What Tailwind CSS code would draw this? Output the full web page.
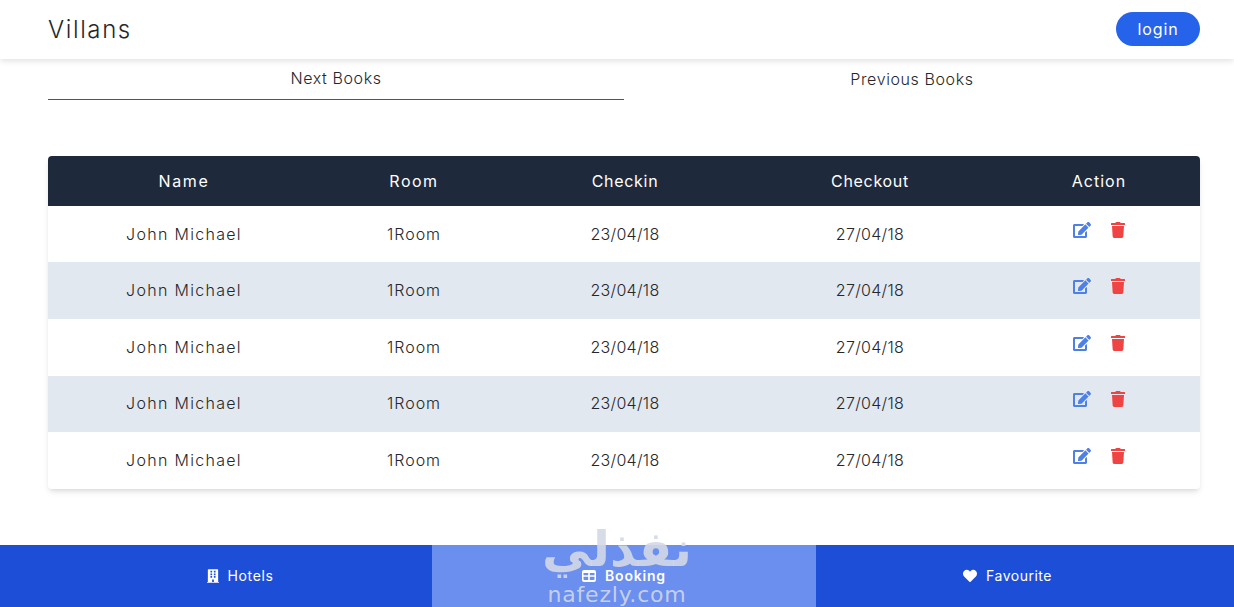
<!DOCTYPE html>
<html lang="en">
<head>
    <meta charset="UTF-8">
    <title>Villans</title>
    <script src="https://cdn.jsdelivr.net/npm/@tailwindcss/browser@4"></script>
</head>
<body class="bg-white text-[#27272a] font-['Inter',sans-serif] font-light h-[607px] overflow-hidden relative">
    <!-- Navbar -->
    <header class="h-[59px] bg-white shadow-[0_2px_6px_rgba(0,0,0,0.12)] pl-12 pr-[34px] flex items-center justify-between">
        <h1 class="text-2xl font-light tracking-[1.6px]">Villans</h1>
        <button class="w-[84px] h-[34px] -mt-[2px] rounded-full bg-[#2563eb] text-white text-base font-normal tracking-[0.9px]">login</button>
    </header>

    <!-- Tabs -->
    <div class="ml-12 w-[1152px] flex h-[41px]">
        <div class="w-1/2 border-b border-[#4b5563] text-center text-base pt-[7px] tracking-[0.6px]">Next Books</div>
        <div class="w-1/2 text-center text-base pt-[8px] tracking-[0.6px]">Previous Books</div>
    </div>

    <!-- Bookings table -->
    <div class="ml-12 w-[1152px] mt-[56px] rounded shadow-md overflow-hidden">
        <table class="w-full table-fixed text-center text-base">
            <thead class="bg-[#1e293b] text-white">
                <tr class="h-[50px]">
                    <th class="w-[272px] font-normal tracking-[1.6px]">Name</th>
                    <th class="w-[188px] font-normal tracking-[1.5px]">Room</th>
                    <th class="w-[234px] font-normal tracking-[0.7px]">Checkin</th>
                    <th class="w-[256px] font-normal tracking-[0.7px]">Checkout</th>
                    <th class="font-normal tracking-[1px]">Action</th>
                </tr>
            </thead>
            <tbody>
                <tr class="h-[56px] bg-white">
                    <td class="tracking-[1.3px]">John Michael</td><td class="tracking-[1px]">1Room</td><td class="tracking-[0.3px]">23/04/18</td><td class="tracking-[0.3px]">27/04/18</td>
                    <td>
                        <div class="flex justify-center gap-[20px] pb-[8px]">
                            <svg class="w-[18px] h-4 fill-[#4f80e6]" viewBox="0 0 576 512"><path d="M402.6 83.2l90.2 90.2c3.8 3.8 3.8 10 0 13.8L274.4 405.6l-92.8 10.3c-12.4 1.4-22.9-9.1-21.5-21.5l10.3-92.8L388.8 83.2c3.8-3.8 10-3.8 13.8 0zm162-22.9l-48.8-48.8c-15.2-15.2-39.9-15.2-55.2 0l-35.4 35.4c-3.8 3.8-3.8 10 0 13.8l90.2 90.2c3.8 3.8 10 3.8 13.8 0l35.4-35.4c15.2-15.3 15.2-40 0-55.2zM384 346.2V448H64V128h229.8c3.2 0 6.2-1.3 8.5-3.5l40-40c7.6-7.6 2.2-20.5-8.5-20.5H48C21.5 64 0 85.5 0 112v352c0 26.5 21.5 48 48 48h352c26.5 0 48-21.5 48-48V306.2c0-10.7-12.9-16-20.5-8.5l-40 40c-2.2 2.3-3.5 5.3-3.5 8.5z"/></svg>
                            <svg class="w-[14px] h-4 fill-[#ef4444]" viewBox="0 0 448 512"><path d="M432 32H312l-9.4-18.7A24 24 0 0 0 281.1 0H166.8a23.72 23.72 0 0 0-21.4 13.3L136 32H16A16 16 0 0 0 0 48v32a16 16 0 0 0 16 16h416a16 16 0 0 0 16-16V48a16 16 0 0 0-16-16zM53.2 467a48 48 0 0 0 47.9 45h245.8a48 48 0 0 0 47.9-45L416 128H32z"/></svg>
                        </div>
                    </td>
                </tr>
                <tr class="h-[57px] bg-[#e2e8f0] [&>td]:pb-[2px]">
                    <td class="tracking-[1.3px]">John Michael</td><td class="tracking-[1px]">1Room</td><td class="tracking-[0.3px]">23/04/18</td><td class="tracking-[0.3px]">27/04/18</td>
                    <td>
                        <div class="flex justify-center gap-[20px] pb-[8px]">
                            <svg class="w-[18px] h-4 fill-[#4f80e6]" viewBox="0 0 576 512"><path d="M402.6 83.2l90.2 90.2c3.8 3.8 3.8 10 0 13.8L274.4 405.6l-92.8 10.3c-12.4 1.4-22.9-9.1-21.5-21.5l10.3-92.8L388.8 83.2c3.8-3.8 10-3.8 13.8 0zm162-22.9l-48.8-48.8c-15.2-15.2-39.9-15.2-55.2 0l-35.4 35.4c-3.8 3.8-3.8 10 0 13.8l90.2 90.2c3.8 3.8 10 3.8 13.8 0l35.4-35.4c15.2-15.3 15.2-40 0-55.2zM384 346.2V448H64V128h229.8c3.2 0 6.2-1.3 8.5-3.5l40-40c7.6-7.6 2.2-20.5-8.5-20.5H48C21.5 64 0 85.5 0 112v352c0 26.5 21.5 48 48 48h352c26.5 0 48-21.5 48-48V306.2c0-10.7-12.9-16-20.5-8.5l-40 40c-2.2 2.3-3.5 5.3-3.5 8.5z"/></svg>
                            <svg class="w-[14px] h-4 fill-[#ef4444]" viewBox="0 0 448 512"><path d="M432 32H312l-9.4-18.7A24 24 0 0 0 281.1 0H166.8a23.72 23.72 0 0 0-21.4 13.3L136 32H16A16 16 0 0 0 0 48v32a16 16 0 0 0 16 16h416a16 16 0 0 0 16-16V48a16 16 0 0 0-16-16zM53.2 467a48 48 0 0 0 47.9 45h245.8a48 48 0 0 0 47.9-45L416 128H32z"/></svg>
                        </div>
                    </td>
                </tr>
                <tr class="h-[57px] bg-white [&>td]:pb-[2px]">
                    <td class="tracking-[1.3px]">John Michael</td><td class="tracking-[1px]">1Room</td><td class="tracking-[0.3px]">23/04/18</td><td class="tracking-[0.3px]">27/04/18</td>
                    <td>
                        <div class="flex justify-center gap-[20px] pb-[8px]">
                            <svg class="w-[18px] h-4 fill-[#4f80e6]" viewBox="0 0 576 512"><path d="M402.6 83.2l90.2 90.2c3.8 3.8 3.8 10 0 13.8L274.4 405.6l-92.8 10.3c-12.4 1.4-22.9-9.1-21.5-21.5l10.3-92.8L388.8 83.2c3.8-3.8 10-3.8 13.8 0zm162-22.9l-48.8-48.8c-15.2-15.2-39.9-15.2-55.2 0l-35.4 35.4c-3.8 3.8-3.8 10 0 13.8l90.2 90.2c3.8 3.8 10 3.8 13.8 0l35.4-35.4c15.2-15.3 15.2-40 0-55.2zM384 346.2V448H64V128h229.8c3.2 0 6.2-1.3 8.5-3.5l40-40c7.6-7.6 2.2-20.5-8.5-20.5H48C21.5 64 0 85.5 0 112v352c0 26.5 21.5 48 48 48h352c26.5 0 48-21.5 48-48V306.2c0-10.7-12.9-16-20.5-8.5l-40 40c-2.2 2.3-3.5 5.3-3.5 8.5z"/></svg>
                            <svg class="w-[14px] h-4 fill-[#ef4444]" viewBox="0 0 448 512"><path d="M432 32H312l-9.4-18.7A24 24 0 0 0 281.1 0H166.8a23.72 23.72 0 0 0-21.4 13.3L136 32H16A16 16 0 0 0 0 48v32a16 16 0 0 0 16 16h416a16 16 0 0 0 16-16V48a16 16 0 0 0-16-16zM53.2 467a48 48 0 0 0 47.9 45h245.8a48 48 0 0 0 47.9-45L416 128H32z"/></svg>
                        </div>
                    </td>
                </tr>
                <tr class="h-[56px] bg-[#e2e8f0] [&>td]:pb-[2px]">
                    <td class="tracking-[1.3px]">John Michael</td><td class="tracking-[1px]">1Room</td><td class="tracking-[0.3px]">23/04/18</td><td class="tracking-[0.3px]">27/04/18</td>
                    <td>
                        <div class="flex justify-center gap-[20px] pb-[8px]">
                            <svg class="w-[18px] h-4 fill-[#4f80e6]" viewBox="0 0 576 512"><path d="M402.6 83.2l90.2 90.2c3.8 3.8 3.8 10 0 13.8L274.4 405.6l-92.8 10.3c-12.4 1.4-22.9-9.1-21.5-21.5l10.3-92.8L388.8 83.2c3.8-3.8 10-3.8 13.8 0zm162-22.9l-48.8-48.8c-15.2-15.2-39.9-15.2-55.2 0l-35.4 35.4c-3.8 3.8-3.8 10 0 13.8l90.2 90.2c3.8 3.8 10 3.8 13.8 0l35.4-35.4c15.2-15.3 15.2-40 0-55.2zM384 346.2V448H64V128h229.8c3.2 0 6.2-1.3 8.5-3.5l40-40c7.6-7.6 2.2-20.5-8.5-20.5H48C21.5 64 0 85.5 0 112v352c0 26.5 21.5 48 48 48h352c26.5 0 48-21.5 48-48V306.2c0-10.7-12.9-16-20.5-8.5l-40 40c-2.2 2.3-3.5 5.3-3.5 8.5z"/></svg>
                            <svg class="w-[14px] h-4 fill-[#ef4444]" viewBox="0 0 448 512"><path d="M432 32H312l-9.4-18.7A24 24 0 0 0 281.1 0H166.8a23.72 23.72 0 0 0-21.4 13.3L136 32H16A16 16 0 0 0 0 48v32a16 16 0 0 0 16 16h416a16 16 0 0 0 16-16V48a16 16 0 0 0-16-16zM53.2 467a48 48 0 0 0 47.9 45h245.8a48 48 0 0 0 47.9-45L416 128H32z"/></svg>
                        </div>
                    </td>
                </tr>
                <tr class="h-[57px] bg-white [&>td]:pb-[2px]">
                    <td class="tracking-[1.3px]">John Michael</td><td class="tracking-[1px]">1Room</td><td class="tracking-[0.3px]">23/04/18</td><td class="tracking-[0.3px]">27/04/18</td>
                    <td>
                        <div class="flex justify-center gap-[20px] pb-[8px]">
                            <svg class="w-[18px] h-4 fill-[#4f80e6]" viewBox="0 0 576 512"><path d="M402.6 83.2l90.2 90.2c3.8 3.8 3.8 10 0 13.8L274.4 405.6l-92.8 10.3c-12.4 1.4-22.9-9.1-21.5-21.5l10.3-92.8L388.8 83.2c3.8-3.8 10-3.8 13.8 0zm162-22.9l-48.8-48.8c-15.2-15.2-39.9-15.2-55.2 0l-35.4 35.4c-3.8 3.8-3.8 10 0 13.8l90.2 90.2c3.8 3.8 10 3.8 13.8 0l35.4-35.4c15.2-15.3 15.2-40 0-55.2zM384 346.2V448H64V128h229.8c3.2 0 6.2-1.3 8.5-3.5l40-40c7.6-7.6 2.2-20.5-8.5-20.5H48C21.5 64 0 85.5 0 112v352c0 26.5 21.5 48 48 48h352c26.5 0 48-21.5 48-48V306.2c0-10.7-12.9-16-20.5-8.5l-40 40c-2.2 2.3-3.5 5.3-3.5 8.5z"/></svg>
                            <svg class="w-[14px] h-4 fill-[#ef4444]" viewBox="0 0 448 512"><path d="M432 32H312l-9.4-18.7A24 24 0 0 0 281.1 0H166.8a23.72 23.72 0 0 0-21.4 13.3L136 32H16A16 16 0 0 0 0 48v32a16 16 0 0 0 16 16h416a16 16 0 0 0 16-16V48a16 16 0 0 0-16-16zM53.2 467a48 48 0 0 0 47.9 45h245.8a48 48 0 0 0 47.9-45L416 128H32z"/></svg>
                        </div>
                    </td>
                </tr>
            </tbody>
        </table>
    </div>

    <!-- Bottom nav -->
    <nav class="absolute bottom-0 left-0 right-0 h-[62px] flex text-white text-sm font-normal leading-none">
        <a class="w-[432px] bg-[#1d4ed8] flex items-center justify-center gap-[9px] pl-[48px] tracking-[0.6px]">
            <svg class="w-3 h-[14px] fill-white" viewBox="0 0 448 512"><path d="M436 480h-20V24c0-13.255-10.745-24-24-24H56C42.745 0 32 10.745 32 24v456H12c-6.627 0-12 5.373-12 12v20h448v-20c0-6.627-5.373-12-12-12zM128 76c0-6.627 5.373-12 12-12h40c6.627 0 12 5.373 12 12v40c0 6.627-5.373 12-12 12h-40c-6.627 0-12-5.373-12-12V76zm0 96c0-6.627 5.373-12 12-12h40c6.627 0 12 5.373 12 12v40c0 6.627-5.373 12-12 12h-40c-6.627 0-12-5.373-12-12v-40zm52 148h-40c-6.627 0-12-5.373-12-12v-40c0-6.627 5.373-12 12-12h40c6.627 0 12 5.373 12 12v40c0 6.627-5.373 12-12 12zm76 160h-64v-84c0-6.627 5.373-12 12-12h40c6.627 0 12 5.373 12 12v84zm64-172c0 6.627-5.373 12-12 12h-40c-6.627 0-12-5.373-12-12v-40c0-6.627 5.373-12 12-12h40c6.627 0 12 5.373 12 12v40zm0-96c0 6.627-5.373 12-12 12h-40c-6.627 0-12-5.373-12-12v-40c0-6.627 5.373-12 12-12h40c6.627 0 12 5.373 12 12v40zm0-96c0 6.627-5.373 12-12 12h-40c-6.627 0-12-5.373-12-12V76c0-6.627 5.373-12 12-12h40c6.627 0 12 5.373 12 12v40z"/></svg>
            Hotels
        </a>
        <a class="w-[384px] bg-[#6a8fee] flex items-center justify-center gap-[9px] font-semibold tracking-[0.8px]">
            <svg class="w-[14px] h-3 fill-white" viewBox="0 0 14 12"><path fill-rule="evenodd" d="M2 0h10a2 2 0 0 1 2 2v8a2 2 0 0 1-2 2H2a2 2 0 0 1-2-2V2a2 2 0 0 1 2-2zM1.5 3v2.2h4.7V3zm6.3 0v2.2h4.7V3zM1.5 6.8V9a1 1 0 0 0 1 1h3.7V6.8zm6.3 0V10h3.7a1 1 0 0 0 1-1V6.8z"/></svg>
            Booking
        </a>
        <a class="w-[418px] bg-[#1d4ed8] flex items-center justify-center gap-[9px] pr-[35px] tracking-[0.5px]">
            <svg class="w-[14px] h-[14px] fill-white" viewBox="0 0 512 512"><path d="M462.3 62.6C407.5 15.9 326 24.3 275.7 76.2L256 96.5l-19.7-20.3C186.1 24.3 104.5 15.9 49.7 62.6c-62.8 53.6-66.1 149.8-9.9 207.9l193.5 199.8c12.5 12.9 32.8 12.9 45.3 0l193.5-199.8c56.3-58.1 53-154.3-9.8-207.9z"/></svg>
            Favourite
        </a>
    </nav>

    <!-- Watermark over the nav -->
    <div class="absolute left-[517px] top-[533px] w-[200px] text-center pointer-events-none text-[#d3d8e6]/90">
        <div dir="rtl" lang="ar" class="font-['DejaVu_Sans',sans-serif] font-bold text-[49px] leading-[34px]">نفذلي</div>
        <div class="mt-[17px] font-['DejaVu_Sans',sans-serif] font-normal text-[22px] leading-[22px] tracking-[0.8px]">nafezly.com</div>
    </div>
</body>
</html>
